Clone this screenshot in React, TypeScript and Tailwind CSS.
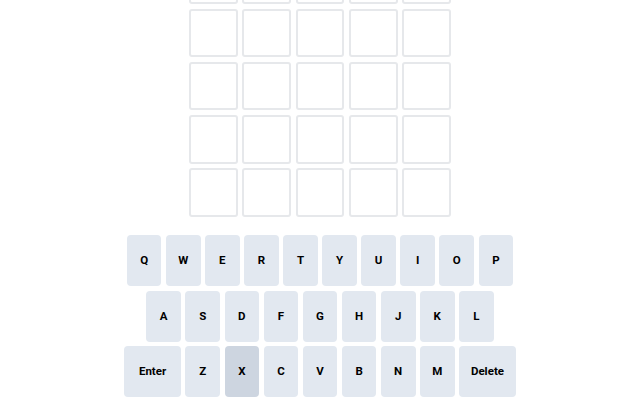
import React from "react";

const ROWS = 6;
const COLS = 5;

const keyRows = [
  ["Q", "W", "E", "R", "T", "Y", "U", "I", "O", "P"],
  ["A", "S", "D", "F", "G", "H", "J", "K", "L"],
  ["Enter", "Z", "X", "C", "V", "B", "N", "M", "Delete"],
];

const usedKeys = ["X"];

const Tile = () => <div className="w-[48.5px] h-[48.5px] rounded-[3px] border-2 border-[#e6e8eb] bg-white" />;

const Key = ({ label }: { label: string }) => {
  const wide = label.length > 1;
  const used = usedKeys.includes(label);
  return (
    <button
      className={`${wide ? "w-[57px]" : "w-[34.7px]"} h-[51px] rounded-[4px] ${
        used ? "bg-[#cdd5e0]" : "bg-[#e2e8f0]"
      } flex items-center justify-center text-[11.5px] font-bold text-black`}
    >
      {label}
    </button>
  );
};

export default function App() {
  return (
    <div
      className="h-screen w-full overflow-hidden bg-white flex flex-col items-center justify-end pb-[3px]"
      style={{ fontFamily: "Roboto, 'Liberation Sans', sans-serif" }}
    >
      <div className="grid gap-[4.8px]">
        {Array.from({ length: ROWS }).map((_, r) => (
          <div key={r} className="flex gap-[4.8px]">
            {Array.from({ length: COLS }).map((_, c) => (
              <Tile key={c} />
            ))}
          </div>
        ))}
      </div>
      <div className="mt-[18.5px] flex flex-col items-center gap-[4.3px]">
        {keyRows.map((row, i) => (
          <div key={i} className="flex gap-[4.4px]">
            {row.map((k) => (
              <Key key={k} label={k} />
            ))}
          </div>
        ))}
      </div>
    </div>
  );
}
